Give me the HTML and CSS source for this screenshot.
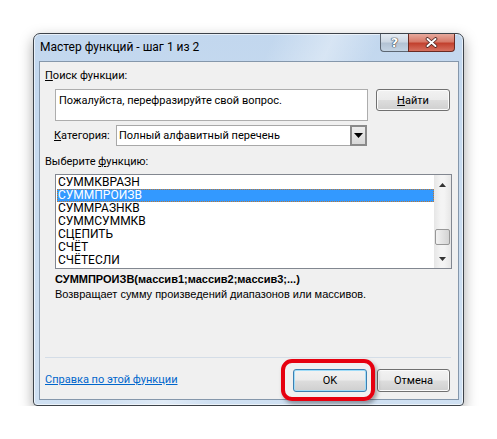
FILE: index.html
```html
<!DOCTYPE html>
<html>
<head>
    <title>Мастер функций - шаг 1 из 2</title>
    <link rel="stylesheet" href="styles.css">
</head>
<body>
    <div class="window">
        <div class="titlebar">
            <div class="title">Мастер функций - шаг 1 из 2</div>
            <div class="caption-buttons">
                <div class="cap-btn help">?</div>
                <div class="cap-btn close">
                    <svg width="13" height="11" viewBox="0 0 13 11">
                        <path d="M2.5 2 L10.5 9 M10.5 2 L2.5 9" stroke="#4a2420" stroke-width="3.6" stroke-linecap="round"/>
                        <path d="M2.5 2 L10.5 9 M10.5 2 L2.5 9" stroke="#fff" stroke-width="2" stroke-linecap="round"/>
                    </svg>
                </div>
            </div>
        </div>

        <div class="client">
            <div class="label"><u>П</u>оиск функции:</div>
            <div class="search-row">
                <div class="search-box">Пожалуйста, перефразируйте свой вопрос.</div>
                <button class="btn find-btn"><u>Н</u>айти</button>
            </div>

            <div class="category-row">
                <span class="label category-label"><u>К</u>атегория:</span>
                <div class="select">
                    <span class="select-text">Полный алфавитный перечень</span>
                    <span class="select-arrow">
                        <svg width="9" height="5" viewBox="0 0 9 5"><path d="M0 0 H9 L4.5 5 Z" fill="#000"/></svg>
                    </span>
                </div>
            </div>

            <div class="label pick-label">Выберите <u>ф</u>ункцию:</div>
            <div class="listbox">
                <ul class="items">
                    <li>СУММКВРАЗН</li>
                    <li class="selected">СУММПРОИЗВ</li>
                    <li>СУММРАЗНКВ</li>
                    <li>СУММСУММКВ</li>
                    <li>СЦЕПИТЬ</li>
                    <li>СЧЁТ</li>
                    <li>СЧЁТЕСЛИ</li>
                </ul>
                <div class="scrollbar">
                    <svg class="arrow" width="7" height="4" viewBox="0 0 7 4"><path d="M0 4 H7 L3.5 0 Z" fill="#333"/></svg>
                    <div class="thumb"></div>
                    <svg class="arrow" width="7" height="4" viewBox="0 0 7 4"><path d="M0 0 H7 L3.5 4 Z" fill="#333"/></svg>
                </div>
            </div>

            <div class="signature">СУММПРОИЗВ(массив1;массив2;массив3;...)</div>
            <div class="description">Возвращает сумму произведений диапазонов или массивов.</div>

            <div class="separator"></div>
            <div class="footer">
                <a class="help-link" href="#">Справка по этой функции</a>
                <div class="ok-wrap">
                    <button class="btn default">OK</button>
                </div>
                <button class="btn cancel-btn">Отмена</button>
            </div>
        </div>
    </div>
</body>
</html>
```

FILE: styles.css
```css
* {
    box-sizing: border-box;
}
body {
    margin: 0;
    background: #fff;
    font-family: Roboto, "Noto Sans", sans-serif;
    font-size: 11px;
    color: #000;
}
.window {
    width: 431px;
    height: 373px;
    margin: 33px 0 0 33px;
    padding: 0 4px 5px 5px;
    display: flex;
    flex-direction: column;
    border: 1px solid #3d434a;
    border-radius: 7px 7px 4px 4px;
    background:
        linear-gradient(115deg, rgba(255,255,255,0) 40%, rgba(255,255,255,0.35) 50%, rgba(255,255,255,0) 58%),
        linear-gradient(180deg, #c2d7ee 0%, #c9dcf0 40%, #cfe0f2 100%);
    box-shadow: 0 5px 14px rgba(0,0,0,0.35), inset 0 0 0 1px rgba(255,255,255,0.6);
}
.titlebar {
    height: 27px;
    display: flex;
    padding-left: 1px;
}
.title {
    align-self: center;
    padding-bottom: 2px;
    font-size: 12px;
    line-height: 16px;
}
.caption-buttons {
    margin-left: auto;
    display: flex;
    height: 18px;
}
.cap-btn {
    height: 18px;
    display: flex;
    align-items: center;
    justify-content: center;
    border: 1px solid #5c6672;
    border-top: none;
}
.help {
    width: 28px;
    border-right: none;
    border-radius: 0 0 0 4px;
    background: linear-gradient(180deg, #e4ebf2 0%, #cdd8e4 45%, #b3c3d4 55%, #c3d3e3 100%);
    color: #fff;
    font-family: "DejaVu Sans", sans-serif;
    font-weight: bold;
    font-size: 13px;
    text-shadow: 0 0 1px #2a3440, 0 0 1px #2a3440, 0 0 1px #2a3440;
}
.close {
    width: 47px;
    margin-right: 4px;
    border-color: #6a2a22;
    border-radius: 0 0 4px 0;
    background: linear-gradient(180deg, #e6a99d 0%, #d77a69 45%, #c2412e 55%, #d6705f 100%);
}
.client {
    height: 339px;
    display: flex;
    flex-direction: column;
    padding: 6px 0 7px 5px;
    border: 1px solid #8597ab;
    background: #f0f0f0;
}
.label {
    line-height: 16px;
}
.search-row {
    display: flex;
    align-items: flex-start;
    margin: 5px 0 0 10px;
}
.search-box {
    width: 313px;
    height: 32px;
    padding: 3px 3px;
    line-height: 16px;
    background: #fff;
    border: 1px solid #adadad;
}
.btn {
    height: 23px;
    padding: 0;
    font-family: Roboto, "Noto Sans", sans-serif;
    font-size: 11px;
    color: #000;
    border: 1px solid #707070;
    border-radius: 3px;
    background: linear-gradient(180deg, #f2f2f2 0%, #ebebeb 48%, #dddddd 52%, #cfcfcf 100%);
    box-shadow: inset 0 0 0 1px #fbfbfb;
}
.find-btn {
    width: 74px;
    height: 22px;
    margin-left: 8px;
}
.category-row {
    display: flex;
    align-items: center;
    margin-top: 4px;
}
.category-label {
    width: 71px;
    padding-left: 9px;
}
.select {
    width: 251px;
    height: 21px;
    display: flex;
    align-items: center;
    background: #fff;
    border: 1px solid #a8a8a8;
}
.select-text {
    padding-left: 2px;
    flex: 1;
}
.select-arrow {
    width: 17px;
    height: 21px;
    margin: -1px -1px -1px 0;
    display: flex;
    align-items: center;
    justify-content: center;
    border: 2px solid #8a8a8a;
    background: linear-gradient(180deg, #ececec, #d8d8d8);
}
.pick-label {
    margin-top: 8px;
}
.listbox {
    width: 397px;
    height: 95px;
    margin: 4px 0 0 10px;
    display: flex;
    background: #fff;
    border: 1px solid #828790;
}
.items {
    flex: 1;
    margin: 0;
    padding: 1px 0 0 1px;
    list-style: none;
    font-size: 12px;
}
.items li {
    height: 13px;
    line-height: 13px;
    padding-left: 1px;
}
.items .selected {
    background: #3399ff;
    color: #fff;
    outline: 1px dotted #c07830;
    outline-offset: -1px;
}
.scrollbar {
    width: 17px;
    display: flex;
    flex-direction: column;
    align-items: center;
    padding: 8px 0 7px;
    background: linear-gradient(90deg, #e6e6e6, #f4f4f4 40%, #f4f4f4 60%, #e6e6e6);
}
.thumb {
    width: 15px;
    height: 16px;
    margin: 42px 0 auto;
    border: 1px solid #979797;
    border-radius: 2px;
    background: linear-gradient(90deg, #f2f2f2, #e3e3e3 50%, #d4d4d4);
}
.signature {
    margin: 3px 0 0 10px;
    line-height: 15px;
    font-family: "Liberation Sans", Arial, sans-serif;
    font-size: 11px;
    font-weight: bold;
}
.description {
    margin-left: 10px;
    line-height: 15px;
    font-family: "Liberation Sans", Arial, sans-serif;
    font-size: 11px;
}
.separator {
    margin: auto 7px 0 0;
    height: 1px;
    background: #d4dde7;
}
.footer {
    display: flex;
    align-items: center;
    margin-top: 11px;
}
.help-link {
    color: #0066cc;
    margin-bottom: 3px;
}
.ok-wrap {
    position: relative;
    margin-left: auto;
}
.ok-wrap::after {
    content: "";
    position: absolute;
    top: -10px;
    left: -12px;
    right: -8px;
    bottom: -9px;
    border: 4px solid #e6000f;
    border-radius: 11px;
    box-shadow: 2px 3px 4px rgba(0,0,0,0.35);
}
.default {
    width: 74px;
    display: block;
    border-color: #3c7fb1;
    box-shadow: inset 0 0 0 1px #9fdcf8;
}
.cancel-btn {
    width: 73px;
    margin: 0 8px 0 10px;
}
```
